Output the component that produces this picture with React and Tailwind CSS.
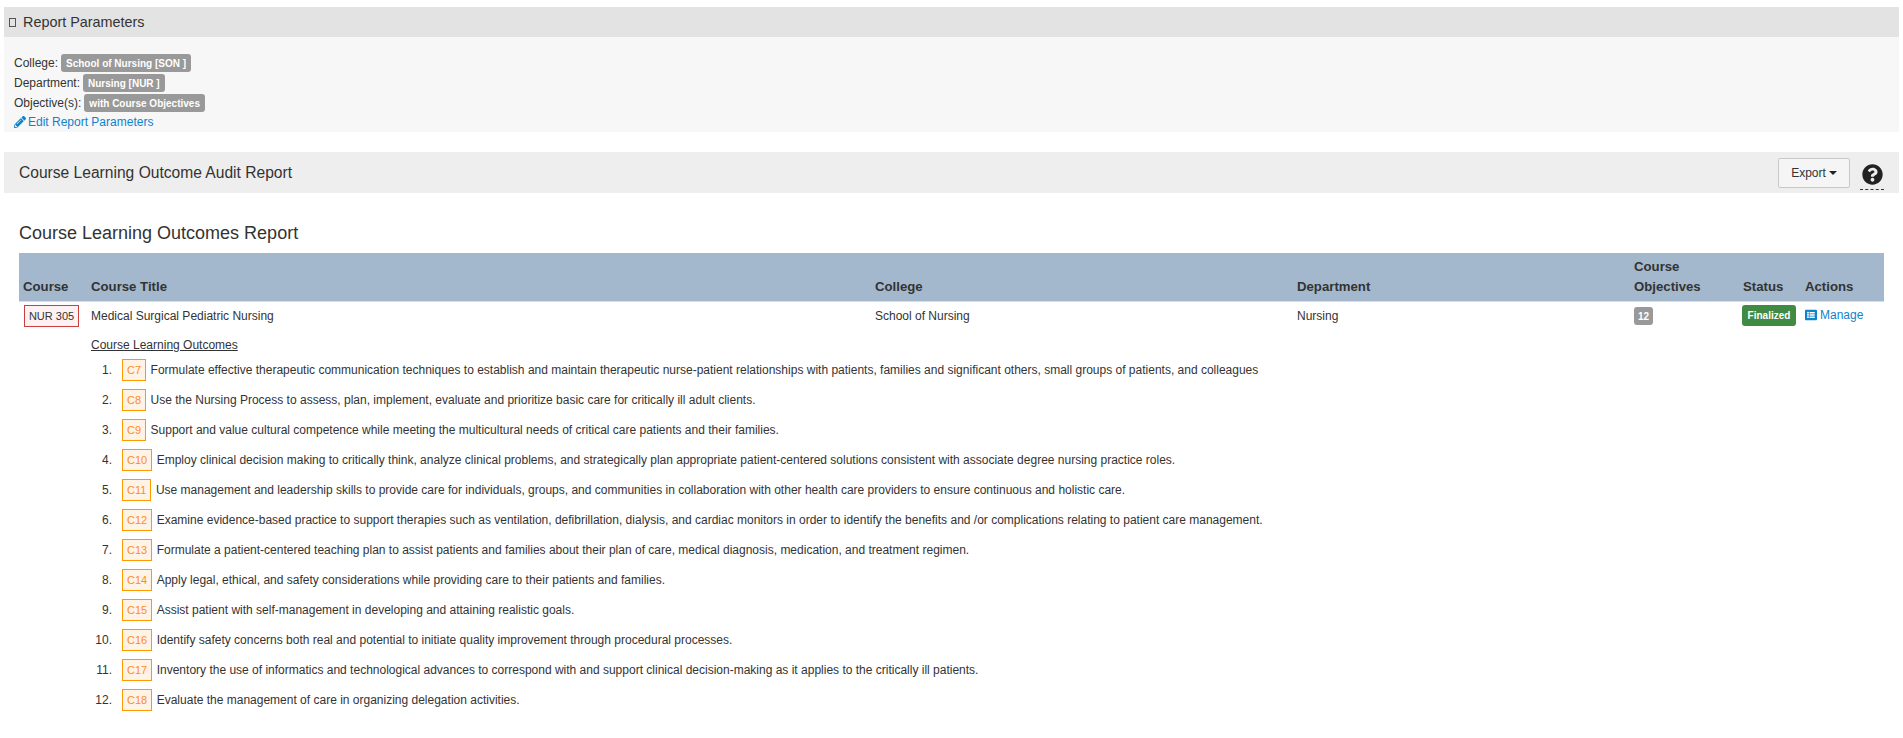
import React from "react";
import { FaPencilAlt, FaQuestionCircle, FaListAlt } from "react-icons/fa";

const items = [
  ["C7", "Formulate effective therapeutic communication techniques to establish and maintain therapeutic nurse-patient relationships with patients, families and significant others, small groups of patients, and colleagues"],
  ["C8", "Use the Nursing Process to assess, plan, implement, evaluate and prioritize basic care for critically ill adult clients."],
  ["C9", "Support and value cultural competence while meeting the multicultural needs of critical care patients and their families."],
  ["C10", "Employ clinical decision making to critically think, analyze clinical problems, and strategically plan appropriate patient-centered solutions consistent with associate degree nursing practice roles."],
  ["C11", "Use management and leadership skills to provide care for individuals, groups, and communities in collaboration with other health care providers to ensure continuous and holistic care."],
  ["C12", "Examine evidence-based practice to support therapies such as ventilation, defibrillation, dialysis, and cardiac monitors in order to identify the benefits and /or complications relating to patient care management."],
  ["C13", "Formulate a patient-centered teaching plan to assist patients and families about their plan of care, medical diagnosis, medication, and treatment regimen."],
  ["C14", "Apply legal, ethical, and safety considerations while providing care to their patients and families."],
  ["C15", "Assist patient with self-management in developing and attaining realistic goals."],
  ["C16", "Identify safety concerns both real and potential to initiate quality improvement through procedural processes."],
  ["C17", "Inventory the use of informatics and technological advances to correspond with and support clinical decision-making as it applies to the critically ill patients."],
  ["C18", "Evaluate the management of care in organizing delegation activities."],
];

function Param({ label, value }) {
  return (
    <div className="h-5 flex items-center gap-[3px]">
      <span>{label}</span>
      <span className="h-[18px] px-[5px] flex items-center rounded-[3px] bg-[#999999] text-white font-bold text-[10px]">{value}</span>
    </div>
  );
}

export default function App() {
  return (
    <div className="min-h-[738px] bg-white px-1 pt-[7px] text-[12px] text-[#333333] font-['Liberation_Sans',Arial,sans-serif] overflow-hidden">
      <div className="h-[30px] bg-[#e3e3e3] flex items-center pl-[5px] text-[14.4px]">
        <span className="w-[7px] h-[9px] border border-[#555555] mr-[7px] mt-px" />
        <span className="mt-px">Report Parameters</span>
      </div>
      <div className="h-[95px] bg-[#f7f7f7] pl-[10px] pt-[16px]">
        <Param label="College:" value="School of Nursing [SON ]" />
        <Param label="Department:" value="Nursing [NUR ]" />
        <Param label="Objective(s):" value="with Course Objectives" />
        <a className="h-[18px] flex items-center text-[#0e83cd]">
          <FaPencilAlt className="w-3 h-3 mr-[2px]" />
          Edit Report Parameters
        </a>
      </div>

      <div className="mt-5 h-[41px] bg-[#eeeeee] flex items-center pl-[15px] pr-[15px]">
        <span className="text-[15.6px] flex-1">Course Learning Outcome Audit Report</span>
        <button className="w-[72px] h-[30px] bg-[#f5f5f5] border border-[#c8c8c8] rounded-[2px] flex items-center justify-center gap-[3px]">
          Export
          <span className="border-x-4 border-t-4 border-x-transparent border-t-[#222222]" />
        </button>
        <div className="ml-[10px] w-6 h-[27px] mt-[8px] pt-px border-b border-dashed border-[#333333] flex justify-center">
          <FaQuestionCircle className="w-[21px] h-[21px] text-[#222222]" />
        </div>
      </div>

      <h2 className="mx-[15px] mt-[29px] text-[18px] leading-[22px]">Course Learning Outcomes Report</h2>

      <table className="ml-[15px] mt-[9px] w-[1865px] table-fixed border-collapse">
        <colgroup>
          <col className="w-[68px]" />
          <col className="w-[784px]" />
          <col className="w-[422px]" />
          <col className="w-[337px]" />
          <col className="w-[109px]" />
          <col className="w-[62px]" />
          <col className="w-[83px]" />
        </colgroup>
        <thead>
          <tr className="h-[48px] bg-[#a3b8cc] text-[13.2px] font-bold align-bottom text-left border-b border-[#dddddd]">
            <th className="px-1 pb-[4px] leading-5">Course</th>
            <th className="px-1 pb-[4px] leading-5">Course Title</th>
            <th className="px-1 pb-[4px] leading-5">College</th>
            <th className="px-1 pb-[4px] leading-5">Department</th>
            <th className="px-1 pb-[4px] leading-5">Course<br />Objectives</th>
            <th className="px-1 pb-[4px] leading-5">Status</th>
            <th className="px-1 pb-[4px] leading-5">Actions</th>
          </tr>
        </thead>
        <tbody>
          <tr className="h-[29px] align-middle">
            <td className="pl-[5px]">
              <span className="inline-flex items-center justify-center w-[55px] h-[22px] border border-[#c9403f] bg-[#fdf2f1] text-[11px]">NUR 305</span>
            </td>
            <td className="px-1">Medical Surgical Pediatric Nursing</td>
            <td className="px-1">School of Nursing</td>
            <td className="px-1">Nursing</td>
            <td className="px-1">
              <span className="inline-flex items-center justify-center w-[19px] h-[18px] rounded-[3px] bg-[#999999] text-white font-bold text-[10px]">12</span>
            </td>
            <td className="pl-[3px]">
              <span className="inline-flex items-center justify-center w-[54px] h-[21px] rounded-[3px] bg-[#418a44] text-white font-bold text-[10px]">Finalized</span>
            </td>
            <td className="px-1">
              <a className="inline-flex items-center gap-[3px] text-[#0e83cd]"><FaListAlt className="w-3 h-3" />Manage</a>
            </td>
          </tr>
          <tr>
            <td />
            <td colSpan={6} className="px-1 pt-[7px]">
              <div className="underline leading-[17px]">Course Learning Outcomes</div>
              <ol className="mt-px">
                {items.map(([code, text], i) => (
                  <li key={code} className="h-[30px] flex items-center">
                    <span className="w-[21px] text-right shrink-0">{i + 1}.</span>
                    <span className="ml-[10px] mr-[4.5px] h-[22px] px-[4px] flex items-center justify-center border border-[#ff9900] bg-[#fff3e6] text-[#ff8c1a] text-[11px] shrink-0">{code}</span>
                    <span>{text}</span>
                  </li>
                ))}
              </ol>
            </td>
          </tr>
        </tbody>
      </table>
    </div>
  );
}
